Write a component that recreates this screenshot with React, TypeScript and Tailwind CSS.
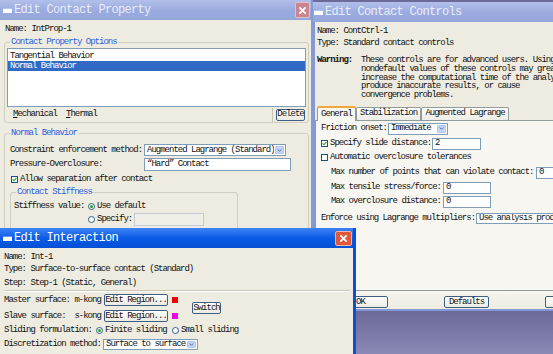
import type { ReactNode } from "react";

function CloseBtn({ active }: { active?: boolean }) {
  return (
    <span
      className={`flex items-center justify-center rounded-[2px] border ${
        active
          ? "h-[15px] w-[17px] border-[#f2b5a2] bg-[#e0573a]"
          : "h-[16px] w-[15px] border-[#e4c0c6] bg-[#cb8490]"
      }`}
    >
      <svg viewBox="0 0 10 10" className="h-[9px] w-[9px]">
        <path d="M1.5 1.5 L8.5 8.5 M8.5 1.5 L1.5 8.5" stroke="white" strokeWidth="2" />
      </svg>
    </span>
  );
}

function TitleBar({ title, active, close, pad = "pl-[3px] pr-[1px]" }: { title: string; active?: boolean; close?: boolean; pad?: string }) {
  return (
    <div
      className={`flex h-[20px] shrink-0 items-center ${pad} ${
        active
          ? "bg-linear-to-b from-[#3d83f5] via-[#0a5be6] to-[#0550d6] text-white"
          : "bg-linear-to-b from-[#b2bfea] via-[#9cacdf] to-[#95a6db] text-[#e8edfa]"
      }`}
    >
      <span className={`h-[5px] w-[9px] shrink-0 border-t bg-white ${active ? "border-[#6a98ea]" : "border-[#b6c2ea]"}`} />
      <span className="ml-[2px] text-[12px] leading-none tracking-[-0.7px]">{title}</span>
      {close ? (
        <span className="ml-auto">
          <CloseBtn active={active} />
        </span>
      ) : null}
    </div>
  );
}

function Check({ on }: { on?: boolean }) {
  return (
    <span className="flex h-[7px] w-[7px] shrink-0 items-center justify-center border border-[#1c5180] bg-white">
      {on ? (
        <svg viewBox="0 0 7 7" className="h-[5px] w-[5px]">
          <path d="M0.8 3.4 L2.7 5.3 L6.2 1.2" stroke="#21a121" strokeWidth="1.5" fill="none" />
        </svg>
      ) : null}
    </span>
  );
}

function Radio({ on }: { on?: boolean }) {
  return (
    <span className="flex h-[7px] w-[7px] shrink-0 items-center justify-center rounded-full border border-[#2a5a88] bg-white">
      {on ? <span className="h-[3px] w-[3px] rounded-full bg-[#21a121]" /> : null}
    </span>
  );
}

function Combo({ value, className }: { value: string; className: string }) {
  return (
    <span className={`flex items-stretch border border-[#7f9db9] bg-white ${className}`}>
      <span className="flex flex-1 items-center overflow-hidden pl-[2px]">{value}</span>
      <span className="m-px flex w-[9px] shrink-0 items-center justify-center rounded-[1px] border border-[#b3c6f3] bg-[#c3d4fc]">
        <svg viewBox="0 0 6 4" className="h-[3px] w-[5px]">
          <path d="M0.7 0.7 L3 3 L5.3 0.7" stroke="#4d6185" strokeWidth="1.3" fill="none" />
        </svg>
      </span>
    </span>
  );
}

function Field({ value, className, disabled }: { value?: string; className: string; disabled?: boolean }) {
  return (
    <span
      className={`flex items-center pl-[2px] ${
        disabled ? "border border-[#c3cad6] bg-[#efeee7]" : "border border-[#7f9db9] bg-white"
      } ${className}`}
    >
      {value}
    </span>
  );
}

function Btn({ children, className }: { children: ReactNode; className: string }) {
  return (
    <span
      className={`flex shrink-0 items-center justify-center rounded-[2px] border border-[#3d5f84] bg-linear-to-b from-white to-[#ebeae2] ${className}`}
    >
      {children}
    </span>
  );
}

function Group({ label, className, children }: { label: string; className: string; children: ReactNode }) {
  return (
    <fieldset className={`rounded-[3px] border border-[#d0cebf] ${className}`}>
      <legend className="px-px leading-[10px] text-[#2b5fe0]">{label}</legend>
      {children}
    </fieldset>
  );
}

function Tab({ label, active, className }: { label: string; active?: boolean; className: string }) {
  return (
    <span
      className={`flex items-center justify-center rounded-t-[2px] border border-b-0 border-[#919b9c] ${
        active
          ? "relative z-10 -mb-px h-[15px] border-t-2 border-t-[#f0a83c] bg-[#f8f7f2]"
          : "h-[13px] bg-linear-to-b from-white to-[#ecebe5]"
      } ${className}`}
    >
      {label}
    </span>
  );
}

export default function App() {
  return (
    <div className="relative h-[354px] w-[553px] overflow-hidden whitespace-nowrap bg-linear-to-b from-[#6c6a98] from-[88%] to-[#8a88b5] font-['Liberation_Mono',monospace] text-[9px] leading-none tracking-[-1px] text-[#111]">
      {/* Edit Contact Property */}
      <div className="absolute left-0 top-0 flex h-[250px] w-[313px] flex-col border-r-2 border-[#8799d6] bg-[#eeece1]">
        <TitleBar title="Edit Contact Property" close />
        <div className="flex flex-col pl-[4px] pr-[2px]">
          <div className="mt-[3px] flex h-[12px] items-center pl-px">Name: IntProp-1</div>
          <Group label="Contact Property Options" className="mt-[2px] px-[2px] pl-[5px]">
            <div className="-ml-[3px] mt-px h-[59px] border border-[#7f9db9] bg-white pt-[2px]">
              <div className="flex h-[10px] items-center pl-[2px]">Tangential Behavior</div>
              <div className="flex h-[10px] items-center bg-[#316ac5] pl-[2px] text-white">Normal Behavior</div>
            </div>
            <div className="flex h-[15px] items-center">
              <span className="ml-[3px]">
                <span className="underline">M</span>echanical
              </span>
              <span className="ml-[9px]">
                <span className="underline">T</span>hermal
              </span>
              <span className="ml-auto h-[14px] w-px bg-[#c8c5b5]" />
              <Btn className="ml-[3px] mr-px h-[12px] w-[29px]">Delete</Btn>
            </div>
          </Group>
          <Group label="Normal Behavior" className="mt-[5px] h-[120px] pl-[5px]">
            <div className="mt-[6px] flex h-[12px] items-center">
              <span className="w-[134px]">Constraint enforcement method:</span>
              <Combo value="Augmented Lagrange (Standard)" className="h-[12px] w-[142px]" />
            </div>
            <div className="mt-[2px] flex h-[13px] items-center">
              <span className="w-[134px]">Pressure-Overclosure:</span>
              <Field value="“Hard” Contact" className="h-[13px] w-[147px]" />
            </div>
            <div className="mt-[3px] flex h-[10px] items-center pl-px">
              <Check on />
              <span className="ml-[2px]">Allow separation after contact</span>
            </div>
            <Group label="Contact Stiffness" className="mt-[3px] h-[60px] w-[228px] pl-[3px] [&>legend]:ml-[2px]">
              <div className="mt-[4px] flex h-[10px] items-center">
                <span className="w-[74px]">Stiffness value:</span>
                <Radio on />
                <span className="ml-[2px]">Use default</span>
              </div>
              <div className="mt-[2px] flex h-[13px] items-center pl-[74px]">
                <Radio />
                <span className="ml-[2px] w-[37px]">Specify:</span>
                <Field disabled className="h-[13px] w-[70px]" />
              </div>
            </Group>
          </Group>
        </div>
      </div>

      {/* Edit Contact Controls */}
      <div className="absolute left-[313px] top-[2px] flex h-[309px] w-[300px] flex-col">
        <TitleBar title="Edit Contact Controls" pad="pl-px" />
        <div className="flex flex-1 flex-col border-b-2 border-l-2 border-[#8497d6] bg-[#eeece1]">
          <div className="mt-[3px] flex h-[12px] items-center pl-[2px]">Name: ContCtrl-1</div>
          <div className="flex h-[12px] items-center pl-[2px]">Type: Standard contact controls</div>
          <div className="mt-[7px] flex pl-[2px] leading-[8.75px]">
            <span className="w-[44px] font-bold">Warning:</span>
            <div className="flex flex-col">
              <span>These controls are for advanced users. Using</span>
              <span>nondefault values of these controls may greatly</span>
              <span>increase the computational time of the analysis,</span>
              <span>produce inaccurate results, or cause</span>
              <span>convergence problems.</span>
            </div>
          </div>
          <div className="mt-[6px] flex h-[14px] items-end pl-[2px]">
            <Tab label="General" active className="w-[39px]" />
            <Tab label="Stabilization" className="w-[65px]" />
            <Tab label="Augmented Lagrange" className="w-[88px]" />
          </div>
          <div className="flex flex-1 flex-col border border-r-0 border-[#919b9c] bg-[#f7f6f0] pl-[5px]">
            <div className="mt-[2px] flex h-[12px] items-center">
              <span className="w-[67px]">Friction onset:</span>
              <Combo value="Immediate" className="h-[12px] w-[60px]" />
            </div>
            <div className="mt-[3px] flex h-[12px] items-center">
              <Check on />
              <span className="ml-[2px] w-[102px]">Specify slide distance:</span>
              <Field value="2" className="h-[12px] w-[49px]" />
            </div>
            <div className="mt-[3px] flex h-[10px] items-center">
              <Check />
              <span className="ml-[2px]">Automatic overclosure tolerances</span>
            </div>
            <div className="mt-[4px] flex h-[12px] items-center pl-[10px]">
              <span className="w-[205px]">Max number of points that can violate contact:</span>
              <Field value="0" className="h-[12px] w-[60px]" />
            </div>
            <div className="mt-[3px] flex h-[12px] items-center pl-[10px]">
              <span className="w-[112px]">Max tensile stress/force:</span>
              <Field value="0" className="h-[12px] w-[48px]" />
            </div>
            <div className="mt-[2px] flex h-[12px] items-center pl-[10px]">
              <span className="w-[112px]">Max overclosure distance:</span>
              <Field value="0" className="h-[12px] w-[48px]" />
            </div>
            <div className="mt-[5px] flex h-[11px] items-center">
              <span className="w-[155px]">Enforce using Lagrange multipliers:</span>
              <Combo value="Use analysis product default" className="h-[11px] w-[135px]" />
            </div>
          </div>
          <div className="flex h-[18px] items-start gap-[56px] bg-linear-to-b from-[#f6f5ee] to-[#eeede3] pl-[18px] pt-[5px]">
            <Btn className="h-[12px] w-[55px]">OK</Btn>
            <Btn className="h-[12px] w-[45px]">Defaults</Btn>
            <Btn className="h-[12px] w-[55px]">Cancel</Btn>
          </div>
        </div>
      </div>

      {/* Edit Interaction */}
      <div className="absolute left-0 top-[228px] flex h-[130px] w-[356px] flex-col border-r-[3px] border-[#0b4fdb] bg-[#eeece1]">
        <TitleBar title="Edit Interaction" active close />
        <div className="flex flex-col pl-[4px]">
          <div className="mt-[3px] flex h-[12px] items-center">Name: Int-1</div>
          <div className="flex h-[13px] items-center">Type: Surface-to-surface contact (Standard)</div>
          <div className="flex h-[14px] items-center">Step: Step-1 (Static, General)</div>
          <div className="mr-[3px] h-[2px] border-t border-b border-t-[#c9c6b6] border-b-white" />
          <div className="mt-[2px] flex items-center">
            <div className="flex flex-col gap-[4px]">
              <div className="flex h-[12px] items-center">
                <span className="w-[100px] whitespace-pre">Master surface: m-kong</span>
                <Btn className="h-[12px] w-[64px]">Edit Region...</Btn>
                <span className="ml-[4px] h-[6px] w-[6px] bg-[#f00000]" />
              </div>
              <div className="flex h-[12px] items-center">
                <span className="w-[100px] whitespace-pre">Slave surface:  s-kong</span>
                <Btn className="h-[12px] w-[64px]">Edit Region...</Btn>
                <span className="ml-[4px] h-[6px] w-[6px] bg-[#f000e8]" />
              </div>
            </div>
            <Btn className="ml-[14px] h-[12px] w-[29px]">Switch</Btn>
          </div>
          <div className="mt-[3px] flex h-[10px] items-center">
            <span className="w-[92px]">Sliding formulation:</span>
            <Radio on />
            <span className="ml-[2px] w-[67px]">Finite sliding</span>
            <Radio />
            <span className="ml-[2px]">Small sliding</span>
          </div>
          <div className="mt-[4px] flex h-[11px] items-center">
            <span className="w-[99px]">Discretization method:</span>
            <Combo value="Surface to surface" className="h-[11px] w-[95px]" />
          </div>
        </div>
      </div>
    </div>
  );
}
